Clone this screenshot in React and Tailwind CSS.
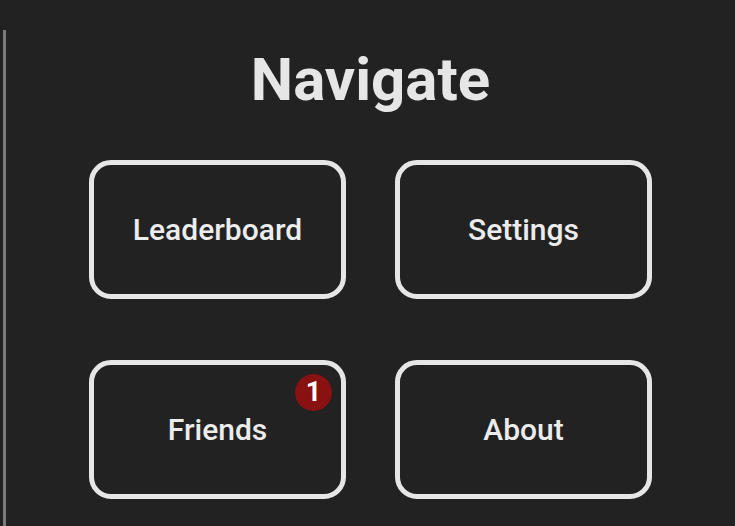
export default function App() {
  const items = [
    { label: "Leaderboard" },
    { label: "Settings" },
    { label: "Friends", badge: 1 },
    { label: "About" },
  ]

  return (
    <div
      className="flex h-[526px] w-[735px] overflow-hidden bg-[#222222] text-[#e6e6e6]"
      style={{ fontFamily: "Roboto, 'Liberation Sans', sans-serif" }}
    >
      {/* Side rule */}
      <div className="flex w-[6px] shrink-0 justify-end pt-[30px]">
        <div className="h-full w-[3px] bg-[#7a7a7a]" />
      </div>

      <div className="flex flex-1 flex-col items-center pt-[50px]">
        <h1 className="text-[60px] font-bold leading-none text-[#e6e6e6]">Navigate</h1>

        <div className="mt-[50px] grid grid-cols-[257px_257px] gap-x-[49px] gap-y-[61px]">
          {items.map((item) => (
            <button
              key={item.label}
              type="button"
              className="relative flex h-[139px] items-center justify-center rounded-[22px] border-[5px] border-[#e6e6e6] text-[30px] font-medium text-[#ececec]"
            >
              {item.label}
              {item.badge ? (
                <span className="absolute right-[9px] top-[9px] flex h-[37px] w-[37px] items-center justify-center rounded-full bg-[#8a1111] text-[27px] font-bold leading-none text-white">
                  {item.badge}
                </span>
              ) : null}
            </button>
          ))}
        </div>
      </div>
    </div>
  )
}
